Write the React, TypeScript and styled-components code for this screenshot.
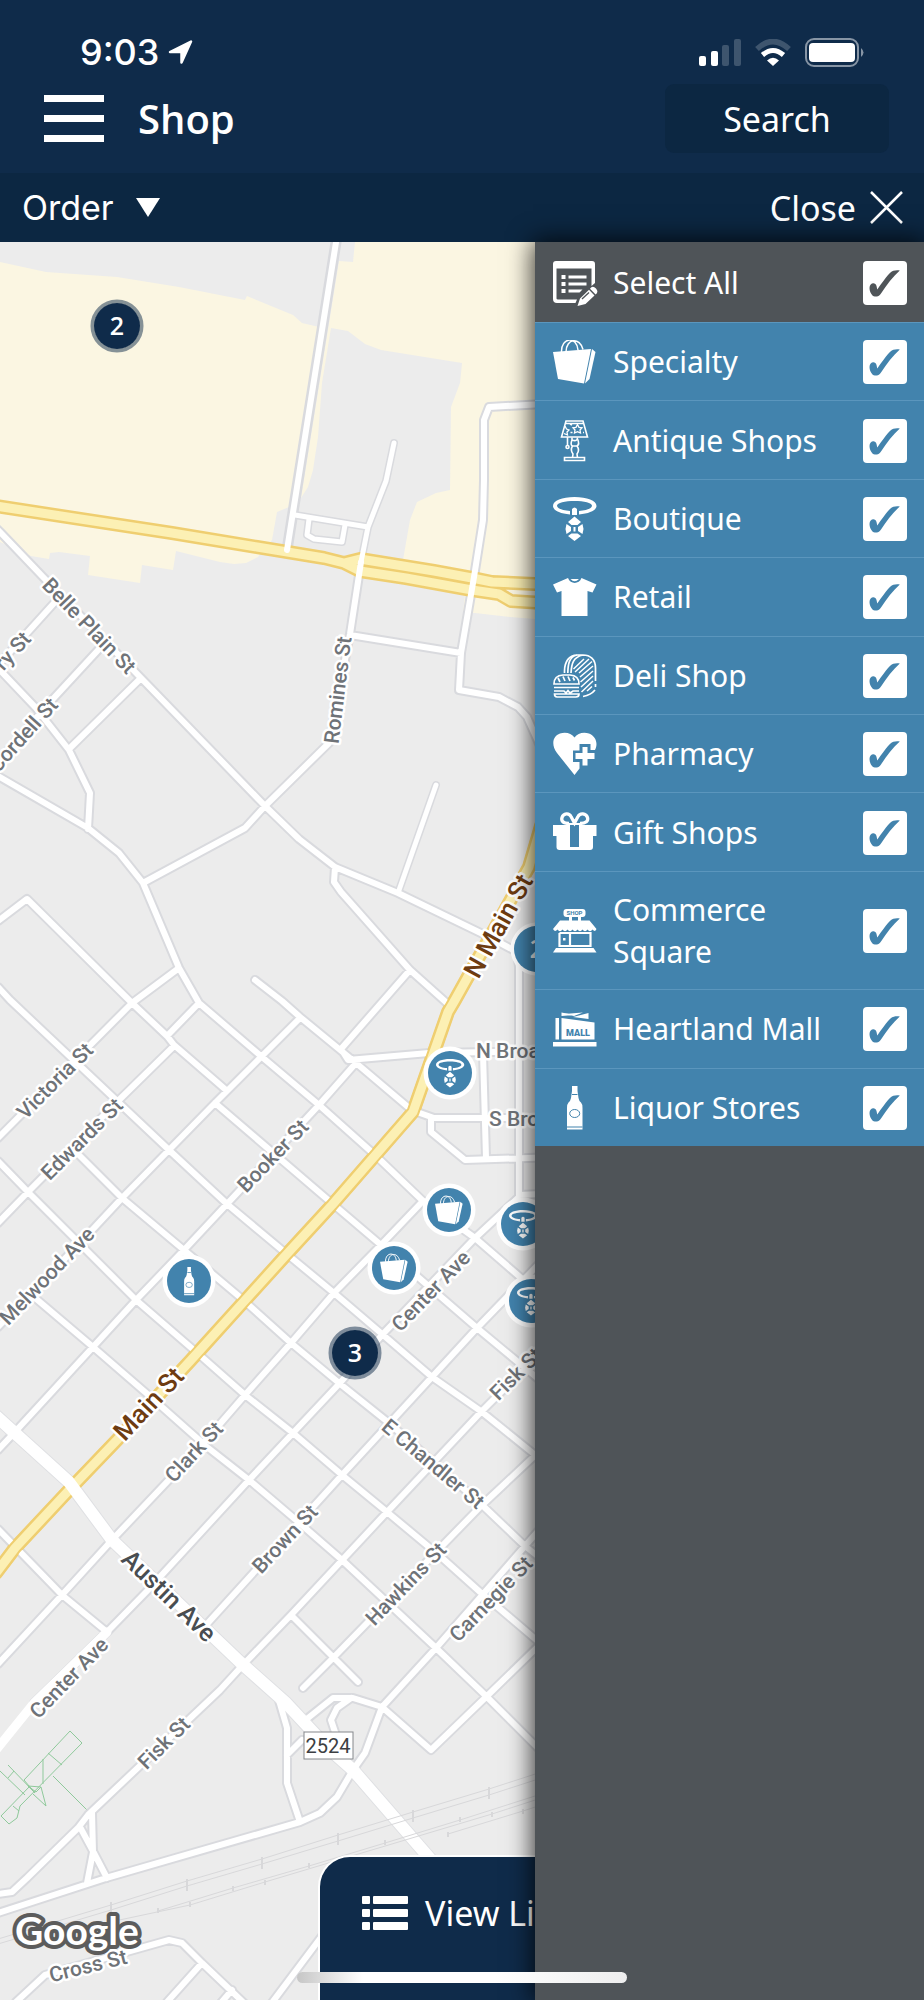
import React, { useState } from "react";
import styled, { createGlobalStyle } from "styled-components";

const navy = "#0f2b4a";
const deepNavy = "#0c2742";
const blue = "#4283ad";
const slate = "#4f5458";

const GlobalStyle = createGlobalStyle`
  * { box-sizing: border-box; }
  body { margin: 0; background: ${slate}; font-family: "Noto Sans", "Open Sans", sans-serif; color: #fff; }
  button { font: inherit; color: inherit; border: 0; background: none; padding: 0; cursor: pointer; }
`;

const Page = styled.div`
  display: flex;
  flex-direction: column;
  min-height: 100vh;
  overflow: hidden;
  position: relative;
`;

const Header = styled.header`
  background: ${navy};
  padding: 20px 35px 20px 44px;
`;

const StatusBar = styled.div`
  display: flex;
  align-items: center;
  justify-content: space-between;
  height: 64px;
  padding: 0 24px 0 36px;
`;

const Clock = styled.div`
  display: flex;
  align-items: center;
  gap: 9px;
  font: 500 36px/64px Inter, sans-serif;
`;

const StatusIcons = styled.div`
  display: flex;
  align-items: center;
  gap: 14px;
`;

const TitleRow = styled.div`
  display: flex;
  align-items: center;
  height: 69px;
`;

const MenuButton = styled.button`
  display: flex;
  flex-direction: column;
  gap: 13px;
  width: 60px;
`;

const MenuLine = styled.span`
  height: 7px;
  width: 100%;
  background: #fff;
`;

const Title = styled.h1`
  margin: 0 auto 0 34px;
  font: 600 40px/52px "Open Sans", sans-serif;
`;

const SearchButton = styled.button`
  width: 224px;
  height: 69px;
  border-radius: 9px;
  background: ${deepNavy};
  font-size: 34px;
`;

const FilterBar = styled.div`
  display: flex;
  align-items: center;
  justify-content: space-between;
  height: 69px;
  padding: 0 21px 0 22px;
  background: ${deepNavy};
`;

const BarButton = styled.button<{ $gap: number; $face?: string }>`
  display: flex;
  align-items: center;
  gap: ${(p) => p.$gap}px;
  font-family: ${(p) => p.$face ?? "inherit"};
  font-size: 34px;
  line-height: 44px;
`;

const Main = styled.main`
  flex: 1;
  display: flex;
  position: relative;
`;

const MapPane = styled.section`
  flex: 1;
  min-width: 0;
  position: relative;
  background: #ececec;
`;

const MapDrawing = styled.svg`
  position: absolute;
  inset: 0;
  width: 100%;
  height: 100%;
`;

const Drawer = styled.aside`
  flex: none;
  width: 389px;
  position: relative;
  background: ${slate};
  box-shadow: 0 0 24px 2px rgba(0, 0, 0, 0.8);
`;

const List = styled.ul`
  list-style: none;
  margin: 0;
  padding: 0;
  display: flex;
  flex-direction: column;
  min-height: 824px;
  background: ${blue};
`;

const Item = styled.li`
  flex: 1 1 auto;
  display: flex;
  box-shadow: inset 0 1px #5b96bd;
`;

const Row = styled.label<{ $height: number; $tone: string }>`
  flex: 1;
  display: flex;
  align-items: center;
  gap: 16px;
  min-height: ${(p) => p.$height}px;
  padding: 18px 17px 16px 18px;
  color: ${(p) => p.$tone};
`;

const RowIcon = styled.svg`
  flex: none;
  width: 44px;
  height: 44px;
  color: #fff;
`;

const RowText = styled.span`
  flex: 1;
  color: #fff;
  font-size: 30px;
  line-height: 42px;
`;

const Tick = styled.span`
  display: grid;
  width: 44px;
  height: 44px;
  & > * { grid-area: 1 / 1; }
  svg { pointer-events: none; visibility: hidden; }
  input:checked + svg { visibility: visible; }
`;

const Box = styled.input`
  appearance: none;
  margin: 0;
  width: 44px;
  height: 44px;
  border-radius: 4px;
  background: #fff;
`;

const ViewButton = styled.button`
  position: absolute;
  bottom: 0;
  left: 50%;
  transform: translateX(-50%);
  display: flex;
  gap: 17px;
  width: 288px;
  height: 145px;
  padding: 34px 0 0 42px;
  border: solid #fff;
  border-width: 2px 2px 0;
  border-radius: 32px 32px 0 0;
  background: ${navy};
  font-size: 34px;
  line-height: 44px;
  white-space: nowrap;
  svg { margin-top: 5px; flex: none; }
`;

const HomeIndicator = styled.div`
  position: absolute;
  bottom: 17px;
  left: 50%;
  transform: translateX(-50%);
  width: 330px;
  height: 11px;
  border-radius: 6px;
  background: linear-gradient(90deg, #c6c6c6, #fff 20%, #fff 60%, #eee);
`;

/* ---------- category icons, drawn on a 44 unit grid ---------- */

type IconName =
  | "all" | "bag" | "lamp" | "necklace" | "shirt" | "deli"
  | "heart" | "gift" | "shop" | "mall" | "bottle";

const glyphs: Record<IconName, React.ReactNode> = {
  all: (
    <>
      <path d="M3 0H39Q42 0 42 3V22L38.500 25V7.500H3.500V37.500Q3.500 38.500 5 38.500H24L22.500 42H4Q0 42 0 38V3Q0 0 3 0Z" fill="currentColor" />
      <path d="M8.500 14h4v4h-4zM15.500 14.500h18v3h-18zM8.500 21h4v4h-4zM15.500 21.500h18v3h-18zM8.500 28h4v4h-4zM15.500 28.500h14l-3 3h-11z" fill="currentColor" />
      <path d="M24.500 45L27 37.500L36 28.800L41.500 34.500L32.500 43ZM37 27.800Q39.500 24 43 27.500Q46 31 42.600 33.500Z" fill="currentColor" />
      <path d="M29 38L36 31.500" stroke={slate} strokeWidth="1.300" />
    </>
  ),
  bag: (
    <>
      <path d="M0 12L38 9L31 43.500L5 39Z" fill="currentColor" />
      <path d="M39 9L42.500 12L36.500 39L32 43.500Z" fill="currentColor" />
      <path d="M8.500 12C8 -3 24 -4 25 10M13 12C13 -2 27 -3 30 9.500" fill="none" stroke="currentColor" strokeWidth="1.500" />
    </>
  ),
  lamp: (
    <g fill="none" stroke="currentColor" strokeWidth="1.600">
      <path d="M13 2H30L34.500 18H8.500ZM12.500 4.500H30.500" />
      <path d="M24.500 5.500L26 8.300L29 8.800L27 11L27.500 14L24.500 12.700L21.500 14L22 11L20 8.800L23 8.300ZM12 7l1.500 3l2.500 1l-2 2l.5 3l-3.500-1.500" strokeWidth="1.300" />
      <path d="M14.500 18V27M17 5l2 1M17.500 13.500h2M30 13.500h1" />
      <circle cx="14.500" cy="28" r="1.500" />
      <path d="M19 18.500V21Q24.500 23 24.500 18.500M19 21Q17 26 19.500 27Q17 31 20 35L19.500 38.500H24.500L24 35Q27 31 24 27Q27 25 24.500 20M19.500 27H24M11.500 38.500H31.500V41.500H11.500Z" />
    </g>
  ),
  necklace: (
    <>
      <path fillRule="evenodd" d="M21.500 0C34 0 43.500 3.500 43.500 9C43.500 13 37 16.500 26 17.500V14C33 13.500 39 11.500 39 8.800C39 6 31 4 21.500 4S4 6 4 8.800C4 11.500 10 13.500 17 14V17.500C6 16.500 0 13 0 9C0 3.500 9 0 21.500 0Z" fill="currentColor" />
      <path d="M19 18V12Q21.500 9 24 12V18Z" fill="currentColor" />
      <path d="M21.500 19.500L28 25L24.500 28H18.500L15 25ZM13.500 27L18 30V34L13.500 37L12.500 32ZM29.500 27L25 30V34L29.500 37L30.500 32ZM20.500 30H22.500V34.500H20.500ZM18.500 36.500H24.500L28 39L21.500 44L15 39Z" fill="currentColor" />
    </>
  ),
  shirt: (
    <>
      <path d="M15 3L0 9.500L4 17.500L8.500 16V41H34.500V16L39.500 17.500L43.500 9.500L28.500 3C26 9.500 17.500 9.500 15 3Z" fill="currentColor" />
      <path d="M17.500 4H26Q21.500 8.500 17.500 4Z" fill="currentColor" />
    </>
  ),
  deli: (
    <g fill="none" stroke="currentColor" strokeWidth="1.700">
      <path d="M42.500 27V14C42.500 5 37 1 30 1H24C16 1 11.500 8 11.500 17V19M30 1C20 3 18.500 10 18 19M24 1C16 3 15 10 14.800 19M42.500 30V33M42 36Q38 41 30 42.500" />
      <path d="M22 18L36 5M20.500 15L31 5M26 19L39 7.500M27 23L40 12M27.500 28L40 17M28 33L40 22M28.500 38L40 27M34 37L39 32.500" strokeWidth="1.500" />
      <path d="M1 30Q1 21.500 10 21H17Q26 21.500 26 30ZM5 24l2 4M10 22.500l2 4.500M15 22.500l2 4.500M20 23.500l1.500 3" />
      <path d="M1 33.500H26M1 37H11L13 39L15 36.500L17 39L20 37H26M1.500 40H26Q26 43 23 43H4Q1.500 43 1.500 40Z" />
    </g>
  ),
  heart: (
    <>
      <path d="M21.500 43L4 21C-2 13 -.500 4 7 1.500C13 -.500 18.500 1.500 21.500 5.500C24.500 1.500 30 -.500 36 1.500C42.500 4 45.500 11 42 18H37.500V12H26.500V18.500H20V30H26.500V36.500Z" fill="currentColor" />
      <path d="M29.500 15H34.500V21H41.500V27H34.500V33.500H29.500V27H22.500V21H29.500Z" fill="currentColor" />
    </>
  ),
  gift: (
    <>
      <path d="M0 14H17V36.500H26V14H43.500V25H40V36Q40 39 37 39H6.500Q3.500 39 3.500 36V25H0Z" fill="currentColor" />
      <path d="M17 36H26V39H17ZM14 12H29V14H14Z" fill="currentColor" />
      <path d="M16 12.500C10 12.500 8 10 9 6.500C10.500 2 16 1.500 18 5.500L21.500 12L25 5.500C27 1.500 33 2 34.500 6.500C35.500 10 33 12.500 27 12.500" fill="none" stroke="currentColor" strokeWidth="3.300" />
    </>
  ),
  shop: (
    <>
      <rect x="10.500" y="0" width="22" height="8" rx="3" fill="currentColor" />
      <text x="21.500" y="6.200" textAnchor="middle" fontFamily="Roboto, sans-serif" fontSize="6" fontWeight="700" fill={blue}>SHOP</text>
      <path d="M16 8h3v4h-3zM25 8h3v4h-3zM7 11.500H36.500L43.500 20Q42 23.500 39.500 20.500Q37 24 34.500 20.500Q32 24 29.500 20.500Q27 24 24.500 20.500Q22 24 19.500 20.500Q17 24 14.500 20.500Q12 24 9.500 20.500Q7 24 4.500 20.500Q2 23.500 0 20Z" fill="currentColor" />
      <path d="M6.500 24V37H37.500V24H6.500M17 24V37" fill="none" stroke="currentColor" strokeWidth="2.200" />
      <rect x="10" y="29" width="2.500" height="2.500" fill="currentColor" />
      <path d="M3 39H40.500L43.500 43.500H0Z" fill="currentColor" />
    </>
  ),
  mall: (
    <>
      <path d="M0 35H43.500V39.500H0ZM2.500 11H6V32.500H2.500ZM8.500 11L41.500 15.500V32.500H8.500ZM8.500 5.500L21 8L8.500 9ZM20 10L35.500 6V12ZM11 7L30 5.500L21 9Z" fill="currentColor" />
      <text x="25" y="28.500" textAnchor="middle" fontFamily="Roboto, sans-serif" fontSize="9" fontWeight="900" fill={blue}>MALL</text>
    </>
  ),
  bottle: (
    <>
      <path d="M19 0H24.500V5L25.500 12Q26 15 28 16.500Q29.500 18 29.500 22V43.500H14V22Q14 18 15.500 16.500Q17.500 15 18 12L19 5Z" fill="currentColor" />
      <path d="M19 8.500H24.500M14 41H29.500" stroke={blue} strokeWidth="1.200" />
      <ellipse cx="21.700" cy="27.500" rx="5" ry="4" fill="none" stroke={blue} />
    </>
  ),
};

const categories: { name: string; icon: IconName }[] = [
  { name: "Specialty", icon: "bag" },
  { name: "Antique Shops", icon: "lamp" },
  { name: "Boutique", icon: "necklace" },
  { name: "Retail", icon: "shirt" },
  { name: "Deli Shop", icon: "deli" },
  { name: "Pharmacy", icon: "heart" },
  { name: "Gift Shops", icon: "gift" },
  { name: "Commerce Square", icon: "shop" },
  { name: "Heartland Mall", icon: "mall" },
  { name: "Liquor Stores", icon: "bottle" },
];

/* ---------- map data ---------- */

const land = [
  "M0 262L46 272L117 277L179 287L245 300L247 296L293 315L302 323L319 327L289 507L277 512L272 540L258 557L246 563L234 564L220 562L176 551L173 570L142 565L140 583L88 575L90 556L59 552L50 553L49 559L31 556L0 542Z",
  "M355 242L353 262L339 261L301 498L308 487L313 470L318 437L322 383L331 328L348 331L365 344L381 350L462 363L460 383L451 407L450 490L436 493L417 502L410 520L403 560L465 595L463 612L475 613L510 617L560 621V242Z",
];

const streets = [
  "M-4 528L0 532L43 577L141 678L265 806L299 839L335 867L398 893L489 937L517 952L519 967V1197",
  "M55 602L-10 674M100 648L52 700L-4 764M141 678L69 749",
  "M-2 668L36 708L69 750L90 793L88 829",
  "M-2 776L88 828L119 853L143 883L179 968L199 1003L262 1057L319 1105L375 1155L422 1200L475 1238L520 1277L560 1311",
  "M361 562L350 634L329 743L265 806L245 828L143 883",
  "M350 635L461 653",
  "M560 403L489 407L484 420V480L483 520L474 577L461 653L459 690L499 697L518 707L527 717L545 757",
  "M335 867L334 882L341 892L410 970L448 1004M410 970L341 1049L348 1060L429 1053L560 1051",
  "M-2 921L27 899L132 1003L167 1036L174 1045L226 1090M179 968L132 1003L-2 1138",
  "M-2 987L10 1000L169 1150L227 1204L288 1255L334 1293L382 1334L432 1377L482 1412L560 1475",
  "M255 980L282 1001L300 1017L356 1063L408 1107",
  "M199 1003L167 1036M174 1046L119 1100L28 1192L-2 1223",
  "M300 1018L226 1092L215 1103L122 1198L81 1242L-2 1327",
  "M215 1103L334 1205L381 1245L477 1328L560 1397",
  "M356 1063L319 1105L227 1204L184 1250L136 1300L93 1347L14 1433L-2 1450",
  "M422 1202L381 1245L334 1293L291 1343L245 1395L200 1447L112 1540L62 1595L-2 1664",
  "M519 1197L475 1238L382 1335L339 1384L293 1433L249 1480L148 1590L107 1632L34 1703",
  "M560 1242L477 1328L432 1377L342 1475L207 1624",
  "M560 1333L480 1413L387 1512L291 1615L241 1667L220 1690L88 1815L78 1828L27 1878L12 1892L-2 1894",
  "M560 1432L480 1507L334 1657L303 1688M291 1615L358 1682",
  "M560 1506L525 1546L436 1648L382 1707L431 1750L486 1697L560 1625",
  "M382 1707L353 1698H333L308 1718M351 1698L337 1708L331 1720L337 1738",
  "M-2 1161L28 1192L83 1247L136 1300L203 1358L245 1395L293 1433L342 1475L387 1512L441 1557L480 1592L560 1660",
  "M77 1153L122 1198L184 1250L241 1298L291 1343L339 1383L389 1423L480 1503L525 1546L560 1574",
  "M34 1297L93 1347L145 1392L207 1447L249 1480L296 1520L342 1560L436 1648L486 1696L560 1770",
  "M-2 1529L62 1595L107 1632",
  "M483 1053L486 1158M417 1112L434 1118H560M431 1118V1132L465 1160L560 1157M519 1195L560 1193",
  "M278 1697L287 1728V1783L300 1822M287 1755L302 1740",
  "M-2 1913L106 1878L300 1822L320 1813L337 1797L353 1770L365 1753L382 1707",
  "M92 1813L93 1852L87 1883M80 1827L94 1853L107 1878",
  "M16 2002L45 1975L169 1940L182 1943L202 1963L245 2004M202 1963L167 2002M232 1990L220 2004M325 1932L271 2004",
];

const lanes = [
  "M295 515L368 527M394 443L386 481L368 527L361 562M309 519L307 535L314 539L342 542L345 525",
  "M436 785L398 893",
];

const avenues = ["M337 236L287 550"];
const wideAvenues = ["M-4 1416L69 1482L112 1540L241 1663L286 1703L327 1747L353 1770L432 1861"];
const highways = [
  "M-4 506L172 533L257 547L324 558L344 563L360 571L406 578L472 590L499 594L511 601L560 604",
  "M344 563L360 559L434 571L472 578L492 582L560 585",
  "M541 826L529 867L455 1000L448 1012L413 1112L332 1205L286 1255L191 1360L117 1440L72 1487L15 1548L-4 1573",
];

const rails = [
  "M-2 1939L111 1905L187 1881L262 1859L338 1835L413 1812L489 1789L560 1766",
  "M-2 1944L111 1910L187 1886L262 1864L338 1841L413 1818L489 1795L560 1772",
  "M158 1911L233 1888L309 1866L385 1843L460 1820L560 1788",
  "M49 1935L190 1905L265 1882L492 1814L560 1792M448 1834L523 1811L560 1799",
];
const railTicks =
  "M111 1902v12M187 1879v12M262 1857v12M338 1833v12M413 1810v12M489 1787v12M158 1908v5M233 1886v5M309 1863v5M385 1840v5M460 1817v5M190 1902v5M265 1880v5M492 1812v5M448 1832v5M523 1809v5";
const trails =
  "M24 1780L70 1731L82 1743L20 1806L17 1818L9 1824L1 1816L30 1786M48 1753L62 1765M43 1759V1784M53 1776L88 1811M0 1771L25 1795M8 1765L35 1793M33 1794L46 1806L41 1787L28 1786L36 1792L41 1787M14 1771L8 1778M13 1806L19 1811M24 1780L35 1793";

type Label = { text: string; x: number; y: number; turn: number; kind?: "main" | "avenue"; anchor?: "start" | "end" };
const labels: Label[] = [
  { text: "Belle Plain St", x: 89, y: 626, turn: 46 },
  { text: "ry St", x: 27, y: 635, turn: -48, anchor: "end" },
  { text: "Cordell St", x: 54, y: 701, turn: -48, anchor: "end" },
  { text: "Romines St", x: 338, y: 690, turn: -83 },
  { text: "N Main St", x: 500, y: 927, turn: -61, kind: "main" },
  { text: "Victoria St", x: 55, y: 1081, turn: -45 },
  { text: "Edwards St", x: 82, y: 1139, turn: -45 },
  { text: "Booker St", x: 273, y: 1156, turn: -46 },
  { text: "Melwood Ave", x: 47, y: 1276, turn: -46 },
  { text: "Center Ave", x: 431, y: 1291, turn: -46 },
  { text: "Fisk St", x: 516, y: 1374, turn: -45 },
  { text: "Main St", x: 150, y: 1405, turn: -47, kind: "main" },
  { text: "Clark St", x: 194, y: 1452, turn: -47 },
  { text: "E Chandler St", x: 433, y: 1464, turn: 40 },
  { text: "Austin Ave", x: 168, y: 1597, turn: 44, kind: "avenue" },
  { text: "Brown St", x: 285, y: 1539, turn: -47 },
  { text: "Hawkins St", x: 406, y: 1584, turn: -46 },
  { text: "Carnegie St", x: 491, y: 1599, turn: -46 },
  { text: "Center Ave", x: 69, y: 1678, turn: -46 },
  { text: "Fisk St", x: 164, y: 1743, turn: -45 },
  { text: "Cross St", x: 88, y: 1966, turn: -14 },
  { text: "N Broadway", x: 476, y: 1051, turn: 0, anchor: "start" },
  { text: "S Broadway", x: 489, y: 1119, turn: 0, anchor: "start" },
];

const labelColor = { street: "#6f7378", main: "#6e3c11", avenue: "#494d51" };

const pins: { icon: IconName; x: number; y: number }[] = [
  { icon: "necklace", x: 450, y: 1073 },
  { icon: "bag", x: 449, y: 1210 },
  { icon: "bag", x: 394, y: 1268 },
  { icon: "necklace", x: 523, y: 1224 },
  { icon: "necklace", x: 531, y: 1301 },
  { icon: "bottle", x: 189, y: 1281 },
];

const clusters = [
  { count: 2, x: 117, y: 326, color: navy, ring: "#0f2b4a80" },
  { count: 3, x: 355, y: 1353, color: navy, ring: "#0f2b4a80" },
  { count: 2, x: 537, y: 949, color: blue, ring: "#ffffff" },
];

const Lines = ({ paths, color, width }: { paths: string[]; color: string; width: number }) => (
  <path d={paths.join("")} fill="none" stroke={color} strokeWidth={width} strokeLinejoin="round" strokeLinecap="round" />
);

const TownMap = () => (
  <MapDrawing viewBox="0 242 535 1758" preserveAspectRatio="xMinYMin slice" role="img" aria-label="Street map">
    {land.map((d) => <path key={d} d={d} fill="#fbf6e2" />)}
    <path d={trails} fill="none" stroke="#8fc99b" strokeWidth="1" />
    <Lines paths={streets} color="#d9dade" width={10} />
    <Lines paths={lanes} color="#d9dade" width={8} />
    <Lines paths={avenues} color="#d9dade" width={11} />
    <Lines paths={wideAvenues} color="#dfe0e3" width={14} />
    <Lines paths={highways} color="#efce70" width={14} />
    <Lines paths={highways} color="#fcf0b4" width={9} />
    <Lines paths={streets} color="#fff" width={6} />
    <Lines paths={lanes} color="#fff" width={5} />
    <Lines paths={avenues} color="#fff" width={6} />
    <Lines paths={[highways[2]]} color="#efce70" width={13} />
    <Lines paths={[highways[2]]} color="#fcf0b4" width={9} />
    <Lines paths={wideAvenues} color="#fff" width={12} />
    <Lines paths={["M107 1632L34 1703L-4 1750"]} color="#fff" width={9} />
    <Lines paths={rails} color="#d8d8da" width={1} />
    <path d={railTicks} stroke="#d8d8da" strokeWidth="2" />
    {labels.map((l, i) => (
      <text
        key={i}
        transform={`translate(${l.x} ${l.y}) rotate(${l.turn})`}
        dy="7"
        textAnchor={l.anchor ?? "middle"}
        fontFamily="Roboto, sans-serif"
        fontSize={l.kind === "main" ? 26 : l.kind ? 25 : 21}
        fontWeight={500}
        fill={labelColor[l.kind ?? "street"]}
        stroke="#fff"
        strokeWidth="5"
        strokeLinejoin="round"
        paintOrder="stroke"
      >
        {l.text}
      </text>
    ))}
    <rect x="304" y="1732" width="49" height="27" fill="#fff" stroke="#85888c" />
    <text x="328" y="1753" textAnchor="middle" fontFamily="Roboto, sans-serif" fontSize="20" fill="#3c3f43">2524</text>
    {pins.map((p, i) => (
      <g key={i} transform={`translate(${p.x} ${p.y})`}>
        <circle r="26.500" fill="#fff" />
        <circle r="22" fill={blue} />
        <g transform="translate(-14 -14) scale(.65)" color="#fff">{glyphs[p.icon]}</g>
      </g>
    ))}
    {clusters.map((c, i) => (
      <g key={i} transform={`translate(${c.x} ${c.y})`}>
        <circle r="24.500" fill="none" stroke={c.ring} strokeWidth="4" />
        <circle r="23" fill={c.color} />
        <text y="9" textAnchor="middle" fontFamily="Open Sans, sans-serif" fontSize="25" fontWeight="600" fill="#fff">{c.count}</text>
      </g>
    ))}
    <text x="15" y="1945" fontFamily="Lato, sans-serif" fontSize="39" fontWeight="700" fill="#fff" stroke="#5c5c5c" strokeWidth="8" strokeLinejoin="round" paintOrder="stroke">
      Google
    </text>
  </MapDrawing>
);

const Check = ({ label, checked, onChange }: { label: string; checked: boolean; onChange: () => void }) => (
  <Tick>
    <Box type="checkbox" aria-label={label} checked={checked} onChange={onChange} />
    <svg width="44" height="44" viewBox="0 0 44 44" aria-hidden="true">
      <path d="M6.500 27C6.500 21.500 12.500 20.500 13.500 25L14.300 28.500C19 22 23.500 15 27.500 11.500C29.500 9.500 33 9 36.800 9.500C30 15.500 23.500 24 18 32.500C15.500 36.500 11 36 9.500 34.500C7.500 32.500 6.500 29.500 6.500 27Z" fill="currentColor" />
    </svg>
  </Tick>
);

export default function App() {
  const [on, setOn] = useState<boolean[]>(categories.map(() => true));
  const all = on.every(Boolean);

  return (
    <Page>
      <GlobalStyle />
      <Header>
        <StatusBar>
          <Clock>
            9:03
            <svg width="25" height="25" viewBox="0 0 25 25"><path d="M23 1.500L13.500 22.500V12H2Z" fill="#fff" stroke="#fff" strokeWidth="2.500" strokeLinejoin="round" /></svg>
          </Clock>
          <StatusIcons>
            <svg width="42" height="27" viewBox="0 0 42 27">
              <rect y="17" width="7" height="10" rx="2" fill="#fff" />
              <rect x="12" y="12" width="7" height="15" rx="2" fill="#fff" />
              <rect x="23" y="6" width="7" height="21" rx="2" fill="#3e556e" />
              <rect x="35" width="7" height="27" rx="2" fill="#3e556e" />
            </svg>
            <svg width="36" height="27" viewBox="0 0 36 27" fill="none">
              <path d="M2 10Q18 -5 34 10" stroke="#3e556e" strokeWidth="5.500" />
              <path d="M7.500 16Q18 7 28.500 16" stroke="#fff" strokeWidth="5" />
              <path d="M12 21.500Q18 16 24 21.500L18 27Z" fill="#fff" />
            </svg>
            <svg width="60" height="29" viewBox="0 0 60 29">
              <rect x="1" y="1" width="52" height="27" rx="8" fill="none" stroke="#8795a5" strokeWidth="2" />
              <rect x="4" y="5" width="46" height="19" rx="4" fill="#fff" />
              <path d="M56 10Q61 14.500 56 19Z" fill="#8795a5" />
            </svg>
          </StatusIcons>
        </StatusBar>
        <TitleRow>
          <MenuButton aria-label="Menu">
            <MenuLine /><MenuLine /><MenuLine />
          </MenuButton>
          <Title>Shop</Title>
          <SearchButton>Search</SearchButton>
        </TitleRow>
      </Header>
      <FilterBar>
        <BarButton $gap={22} $face="Inter, sans-serif">
          Order
          <svg width="24" height="19" viewBox="0 0 24 19"><path d="M0 0H24L12 19Z" fill="#fff" /></svg>
        </BarButton>
        <BarButton $gap={14}>
          Close
          <svg width="33" height="33" viewBox="0 0 33 33"><path d="M1 1L32 32M32 1L1 32" stroke="#fff" strokeWidth="2.500" /></svg>
        </BarButton>
      </FilterBar>
      <Main>
        <MapPane>
          <TownMap />
        </MapPane>
        <ViewButton>
          <svg width="46" height="34" viewBox="0 0 46 34" fill="#fff">
            {[0, 13, 26].map((y) => (
              <g key={y}>
                <rect y={y} width="8" height="8" rx="1" />
                <rect x="11" y={y} width="35" height="8" rx="1" />
              </g>
            ))}
          </svg>
          View List
        </ViewButton>
        <Drawer>
          <Row $height={80} $tone={slate}>
            <RowIcon viewBox="0 0 44 44" overflow="visible">{glyphs.all}</RowIcon>
            <RowText>Select All</RowText>
            <Check label="Select All" checked={all} onChange={() => setOn(categories.map(() => !all))} />
          </Row>
          <List>
            {categories.map((c, i) => (
              <Item key={c.name}>
                <Row $height={78} $tone={blue}>
                  <RowIcon viewBox="0 0 44 44">{glyphs[c.icon]}</RowIcon>
                  <RowText>{c.name}</RowText>
                  <Check label={c.name} checked={on[i]} onChange={() => setOn(on.map((v, j) => (j === i ? !v : v)))} />
                </Row>
              </Item>
            ))}
          </List>
        </Drawer>
      </Main>
      <HomeIndicator />
    </Page>
  );
}
